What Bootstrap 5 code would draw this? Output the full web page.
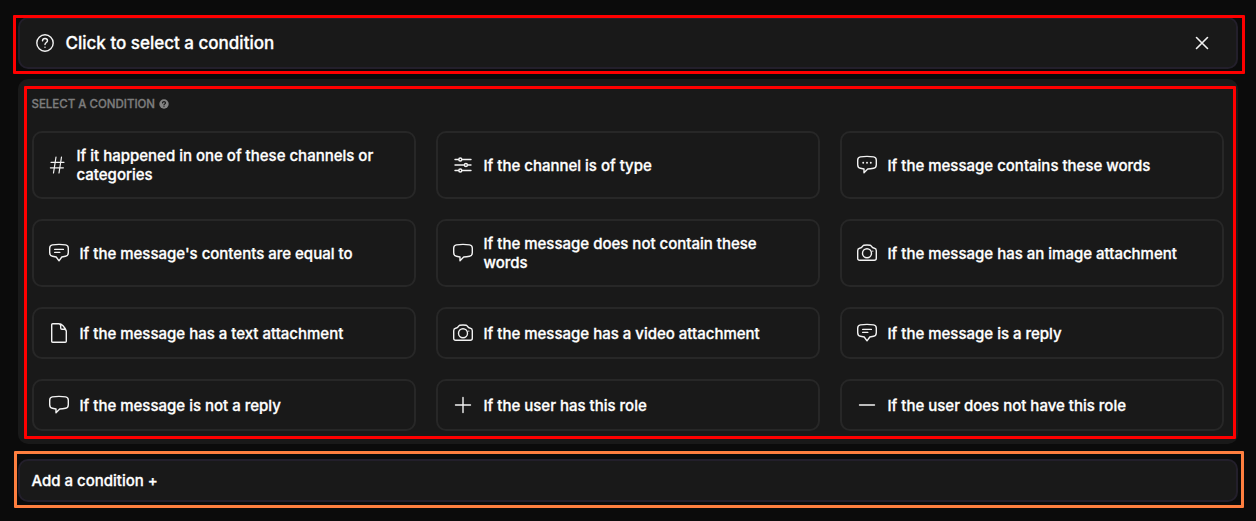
<!DOCTYPE html>
<html lang="en" data-bs-theme="dark">
<head>
<meta charset="utf-8">
<meta name="viewport" content="width=device-width, initial-scale=1">
<title>Select a condition</title>
<link href="https://cdn.jsdelivr.net/npm/bootstrap@5.3.0/dist/css/bootstrap.min.css" rel="stylesheet">
<style>
body{background:#0b0b0b;color:#fff;font-family:Inter,"Liberation Sans",sans-serif;font-size:15px;font-weight:500;line-height:19px;height:521px;overflow:hidden;-webkit-text-stroke:.3px currentColor}
.builder{padding:17px 18px 0}
.surface{background:#191919;border-radius:10px;position:relative}
.bar{border:2px solid #231f2b}
.bar-head{height:52px;padding:0 27px 0 16px;font-size:17px}
.bar-head .title{margin-left:11.500px}
.panel{margin-top:10px;height:365px;padding:15px 14px 0 13.500px}
.label{font-size:11.500px;line-height:20px;color:#7d7d7d;height:20px}
.choices{display:grid;grid-template-columns:repeat(3,384px);grid-template-rows:68px 68px 52px 52px;gap:20px;margin:17px 0 0 .5px}
.choice{border:2px solid #272727;border-radius:10px;padding:0 30px 0 15px;background:none;color:#fff;text-align:left;gap:10.500px;font-weight:500}
.choice svg{width:20px}
.choice .narrow{width:17px}
.bar-add{margin-top:15px;height:43px;padding:0 11.500px}
svg{flex:none;fill:none;stroke:#f2f2f2;stroke-width:1.4;stroke-linecap:round;stroke-linejoin:round}
.outline-mark{position:absolute;border:3px solid #f00;border-radius:1px;pointer-events:none}
.mark-head{inset:-4px -9px -7px -7px}
.mark-panel{inset:7px 2px 5px 6px}
.mark-add{inset:-10px -8px -8px -6px;border-color:#ff7f3f}
</style>
</head>
<body>
<svg class="d-none">
<symbol id="hash" viewBox="0 0 17 20"><path stroke-width="1.200" d="M7 2 4.500 18M12.500 2 10 18M2 7.300H15M1.400 12.800H14.400"/></symbol>
<symbol id="sliders" viewBox="0 0 20 20"><path d="M2 4.500H5.600M9 4.500H18M2 10H11.200M14.600 10H18M2 15.500H5.600M9 15.500H18"/><circle cx="7.300" cy="4.500" r="1.500"/><circle cx="12.900" cy="10" r="1.500"/><circle cx="7.300" cy="15.500" r="1.500"/></symbol>
<symbol id="bubble" viewBox="0 0 20 20"><path d="M3.400 1.900Q10 .9 16.600 1.900Q19.200 2.300 19.300 5V9.700Q19.200 12.900 16.600 13.300Q13.600 13.900 10.700 14L7 17.800V14L3.400 13.300Q.8 12.900.7 9.700V5Q.8 2.300 3.400 1.900Z"/></symbol>
<symbol id="dots" viewBox="0 0 20 20"><use href="#bubble"/><path stroke-width="1.900" d="M6.200 7.700h.01M10 7.700h.01M13.800 7.700h.01"/></symbol>
<symbol id="lines" viewBox="0 0 20 20"><path d="M3.400 1.900Q10 .9 16.600 1.900Q19.200 2.300 19.300 5V9.700Q19.200 12.900 16.600 13.300L12.800 14 10 17.800 7.200 14 3.400 13.300Q.8 12.900.7 9.700V5Q.8 2.300 3.400 1.900ZM5.700 6.400H14.400M5.700 9.400H10.800"/></symbol>
<symbol id="camera" viewBox="0 0 20 20"><path d="M2.600 5.300Q4.600 5 5.500 3.300L6.700 2.200Q10 1.700 13.300 2.200L14.500 3.300Q15.400 5 17.400 5.300Q19.300 5.600 19.300 7.800V15.300Q19.300 17.300 17.300 17.300H2.700Q.7 17.300.7 15.300V7.800Q.7 5.600 2.600 5.300Z"/><circle cx="10" cy="10.200" r="4.500"/><path d="M15.800 8.100h.01"/></symbol>
<symbol id="file" viewBox="0 0 20 20"><path d="M3.700.7H10Q12 .7 14 2.700T17.300 8V18.300Q17.300 19.300 16.300 19.300H3.700Q2.700 19.300 2.700 18.300V1.700Q2.700.7 3.700.7ZM10 .7Q11.700 1.100 11.700 3V5Q11.700 6.300 13 6.300H15Q16.900 6.300 17.300 8"/></symbol>
<symbol id="plus" viewBox="0 0 20 20"><path d="M10 2.500v15M2.500 10h15"/></symbol>
<symbol id="minus" viewBox="0 0 20 20"><path d="M2.500 10h15"/></symbol>
</svg>
<main class="builder">
<header class="surface bar bar-head d-flex align-items-center">
<svg width="18" height="18" viewBox="0 0 18 18"><circle cx="9" cy="9" r="8.200"/><path d="M6.500 6.900Q6.600 4.500 9 4.500T11.500 6.700C11.500 8.500 9 8.500 9 10.600M9 13.200v.1"/></svg>
<span class="title">Click to select a condition</span>
<svg class="ms-auto" width="14" height="14" viewBox="0 0 14 14"><path stroke-width="1.600" d="m1.500 1.500 11 11M12.500 1.500l-11 11"/></svg>
<i class="outline-mark mark-head"></i>
</header>
<section class="surface panel">
<div class="label d-flex align-items-center">SELECT A CONDITION <svg class="ms-1" width="10" height="10" viewBox="0 0 10 10" stroke="none"><circle cx="5" cy="5" r="4.700" style="fill:#858585;stroke:none"/><path d="M3.500 3.900Q3.600 2.600 5 2.600T6.500 3.900C6.500 4.900 5 4.900 5 5.900M5 7.500v.1" style="stroke:#191919;stroke-width:1.200"/></svg></div>
<div class="choices">
<button class="choice d-flex align-items-center"><svg class="narrow" height="20"><use href="#hash"/></svg><span>If it happened in one of these channels or categories</span></button>
<button class="choice d-flex align-items-center"><svg height="20"><use href="#sliders"/></svg><span>If the channel is of type</span></button>
<button class="choice d-flex align-items-center"><svg height="20"><use href="#dots"/></svg><span>If the message contains these words</span></button>
<button class="choice d-flex align-items-center"><svg height="20"><use href="#lines"/></svg><span>If the message's contents are equal to</span></button>
<button class="choice d-flex align-items-center"><svg height="20"><use href="#bubble"/></svg><span>If the message does not contain these words</span></button>
<button class="choice d-flex align-items-center"><svg height="20"><use href="#camera"/></svg><span>If the message has an image attachment</span></button>
<button class="choice d-flex align-items-center"><svg height="20"><use href="#file"/></svg><span>If the message has a text attachment</span></button>
<button class="choice d-flex align-items-center"><svg height="20"><use href="#camera"/></svg><span>If the message has a video attachment</span></button>
<button class="choice d-flex align-items-center"><svg height="20"><use href="#lines"/></svg><span>If the message is a reply</span></button>
<button class="choice d-flex align-items-center"><svg height="20"><use href="#bubble"/></svg><span>If the message is not a reply</span></button>
<button class="choice d-flex align-items-center"><svg height="20"><use href="#plus"/></svg><span>If the user has this role</span></button>
<button class="choice d-flex align-items-center"><svg height="20"><use href="#minus"/></svg><span>If the user does not have this role</span></button>
</div>
<i class="outline-mark mark-panel"></i>
</section>
<footer class="surface bar bar-add d-flex align-items-center">Add a condition +<i class="outline-mark mark-add"></i></footer>
</main>
<script src="https://cdn.jsdelivr.net/npm/bootstrap@5.3.0/dist/js/bootstrap.bundle.min.js"></script>
</body>
</html>
